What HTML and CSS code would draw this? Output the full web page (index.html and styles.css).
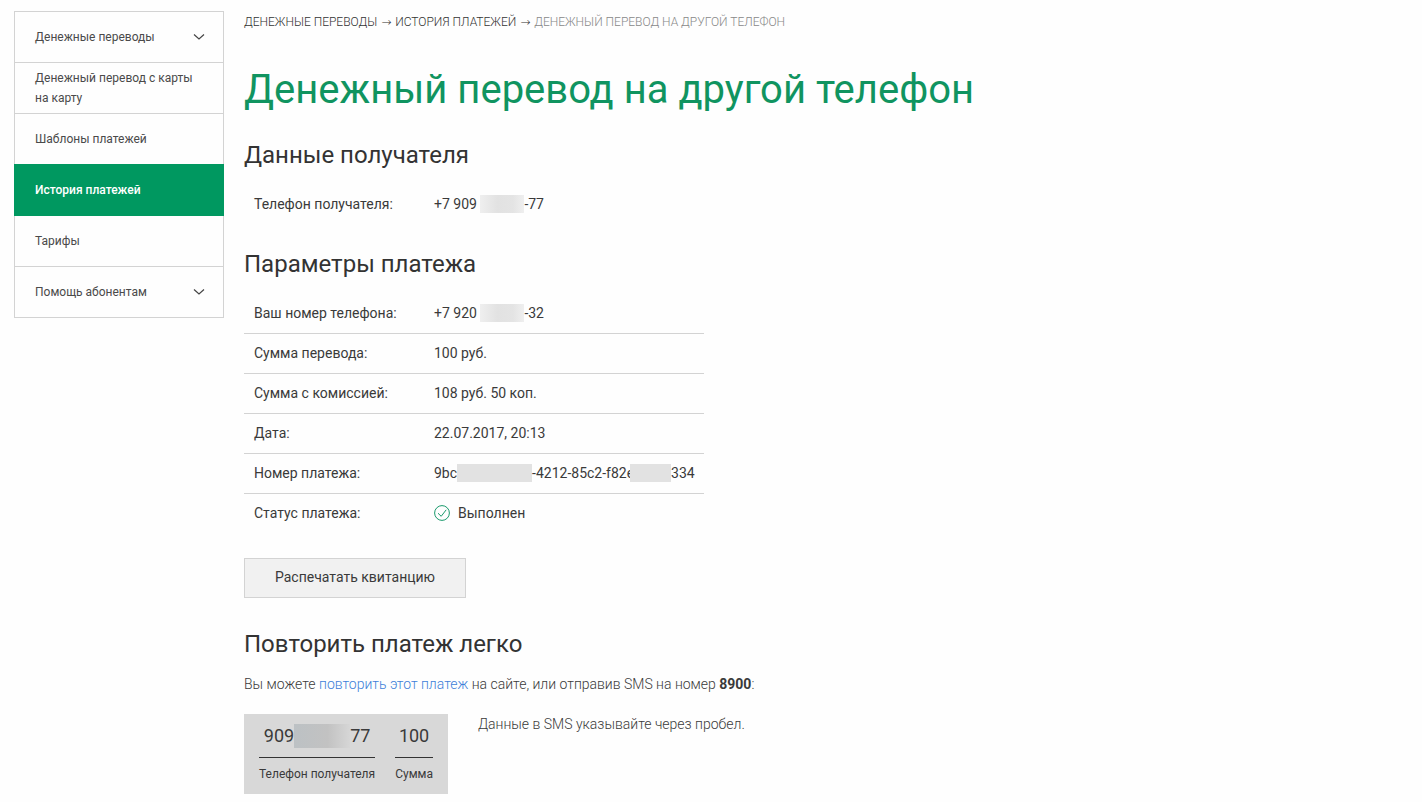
FILE: index.html
```html
<!DOCTYPE html>
<html lang="ru">
<head>
  <meta charset="UTF-8">
  <meta name="viewport" content="width=device-width, initial-scale=1.0">
  <title>Денежный перевод на другой телефон</title>
  <link rel="stylesheet" href="styles.css">
</head>
<body>
  <div class="page">
    <nav class="menu" aria-label="Разделы">
      <a class="menu-item" href="#">
        <span>Денежные переводы</span>
        <svg class="chevron" viewBox="0 0 12 8" fill="none"><path d="M1 1.5L6 6L11 1.5" stroke="#444" stroke-width="1.2"/></svg>
      </a>
      <a class="menu-item" href="#">Денежный перевод с карты на карту</a>
      <a class="menu-item" href="#">Шаблоны платежей</a>
      <a class="menu-item active" href="#">История платежей</a>
      <a class="menu-item" href="#">Тарифы</a>
      <a class="menu-item" href="#">
        <span>Помощь абонентам</span>
        <svg class="chevron" viewBox="0 0 12 8" fill="none"><path d="M1 1.5L6 6L11 1.5" stroke="#444" stroke-width="1.2"/></svg>
      </a>
    </nav>

    <main class="content">
      <div class="breadcrumbs">
        <a href="#">Денежные переводы</a> <span class="arrow">→</span> <a href="#">История платежей</a> <span class="arrow">→</span> <span class="current">Денежный перевод на другой телефон</span>
      </div>

      <h1>Денежный перевод на другой телефон</h1>

      <h2>Данные получателя</h2>
      <table class="details">
        <tr>
          <th scope="row">Телефон получателя:</th>
          <td><span class="number">+7 909 <span class="mask mask-phone"></span>-77</span></td>
        </tr>
      </table>

      <h2>Параметры платежа</h2>
      <table class="details">
        <tr>
          <th scope="row">Ваш номер телефона:</th>
          <td><span class="number">+7 920 <span class="mask mask-phone"></span>-32</span></td>
        </tr>
        <tr>
          <th scope="row">Сумма перевода:</th>
          <td>100 руб.</td>
        </tr>
        <tr>
          <th scope="row">Сумма с комиссией:</th>
          <td>108 руб. 50 коп.</td>
        </tr>
        <tr>
          <th scope="row">Дата:</th>
          <td>22.07.2017, 20:13</td>
        </tr>
        <tr>
          <th scope="row">Номер платежа:</th>
          <td><span class="number">9bc<span class="mask mask-id"></span>-4212-85c2-f82e<span class="mask mask-tail"></span>334</span></td>
        </tr>
        <tr>
          <th scope="row">Статус платежа:</th>
          <td>
            <span class="status">
              <svg class="check" viewBox="0 0 16 16" fill="none" stroke="#1a9a6c"><circle cx="8" cy="8" r="7.4"/><path d="M4 8.2L7.2 11.3L12.2 4.8"/></svg>
              Выполнен
            </span>
          </td>
        </tr>
      </table>

      <button class="print" type="button">Распечатать квитанцию</button>

      <h2>Повторить платеж легко</h2>
      <p class="text">Вы можете <a href="#">повторить этот платеж</a> на сайте, или отправив SMS на номер <strong>8900</strong>:</p>

      <div class="sms">
        <div class="sms-box">
          <div class="sms-field">
            <div class="sms-value">909<span class="mask mask-sms"></span>77</div>
            <div class="sms-label">Телефон получателя</div>
          </div>
          <div class="sms-field">
            <div class="sms-value">100</div>
            <div class="sms-label">Сумма</div>
          </div>
        </div>
        <p class="text">Данные в SMS указывайте через пробел.</p>
      </div>
    </main>
  </div>
</body>
</html>
```
FILE: styles.css
```css
* {
  box-sizing: border-box;
}
body {
  margin: 0;
  font-family: Roboto, "Open Sans", sans-serif;
  font-size: 14px;
  line-height: 20px;
  color: #3a3a3a;
  background-color: #fefefe;
}
a {
  text-decoration: none;
}
.page {
  display: flex;
  align-items: flex-start;
  gap: 20px;
  padding: 11px 14px 8px;
}

/* Боковое меню */
.menu {
  flex: 0 0 210px;
  border: 1px solid #d3d3d3;
}
.menu-item {
  display: flex;
  align-items: center;
  justify-content: space-between;
  min-height: 51px;
  padding: 5px 18px 5px 20px;
  border-bottom: 1px solid #d3d3d3;
  font-size: 12px;
  color: #4a4a4a;
}
.menu-item:last-child {
  min-height: 50px;
  border-bottom: none;
}
.menu-item.active {
  margin: -1px -1px 0;
  min-height: 52px;
  padding-left: 21px;
  border-color: #009860;
  background-color: #009860;
  color: #fff;
  font-weight: 500;
}
.chevron {
  width: 12px;
  height: 8px;
}

/* Основная часть */
.content {
  flex: 1;
  min-width: 0;
}
.breadcrumbs {
  padding-top: 1px;
  font-size: 12px;
  font-weight: 300;
  text-transform: uppercase;
  color: #333;
}
.breadcrumbs a {
  color: #333;
}
.breadcrumbs .arrow {
  padding: 0 1px;
  font-family: "DejaVu Sans", sans-serif;
  font-weight: 200;
  line-height: 1;
}
.breadcrumbs .current {
  color: #888;
}
h1 {
  margin: 34px 0 25px;
  font-size: 40px;
  line-height: 48px;
  font-weight: 400;
  color: #109460;
}
h2 {
  margin: 23px 0 14px;
  font-size: 24px;
  line-height: 32px;
  font-weight: 400;
  color: #333;
}
.details {
  width: 460px;
  max-width: 100%;
  border-spacing: 0;
}
.details th,
.details td {
  height: 40px;
  padding: 0 0 2px 10px;
  border-bottom: 1px solid #d3d3d3;
  text-align: left;
  font-weight: 400;
}
.details th {
  width: 180px;
}
.details tr:last-child th,
.details tr:last-child td {
  border-bottom-color: transparent;
}
.number {
  display: flex;
  align-items: center;
  height: 20px;
  white-space: pre;
}

/* Скрытые цифры */
.mask {
  flex: none;
  height: 18px;
  background-color: #e2e2e2;
}
.mask-phone {
  width: 44px;
  background: linear-gradient(90deg, #efefef, #e2e2e2 40%, #e4e4e4 75%, #efefef);
}
.mask-id {
  width: 75px;
}
.mask-tail {
  width: 41px;
  margin-left: -4px;
}
.mask-sms {
  width: 56px;
  height: 24px;
  background: linear-gradient(90deg, #bcc1c4, #c2c2c2 60%, #d6d6d6);
}

.status {
  display: flex;
  align-items: center;
  gap: 8px;
}
.check {
  width: 16px;
  height: 16px;
}
.print {
  display: block;
  height: 40px;
  margin: 24px 0 30px;
  padding: 0 30px 2px;
  border: 1px solid #d3d3d3;
  background-color: #f1f1f1;
  font: inherit;
  color: #3a3a3a;
  cursor: pointer;
}
.text {
  margin: 0;
  font-weight: 300;
}
.text a {
  color: #3d7fd9;
}
.text strong {
  font-weight: 700;
}

/* Пример SMS */
.sms {
  display: flex;
  align-items: flex-start;
  gap: 30px;
  margin-top: 20px;
}
.sms-box {
  display: flex;
  gap: 20px;
  padding: 8px 15px 10px;
  background-color: #d8d8d8;
}
.sms-value {
  display: flex;
  align-items: center;
  justify-content: center;
  height: 36px;
  padding-bottom: 8px;
  border-bottom: 1px solid #333;
  font-size: 18px;
}
.sms-label {
  margin-top: 6px;
  font-size: 12px;
}
```
